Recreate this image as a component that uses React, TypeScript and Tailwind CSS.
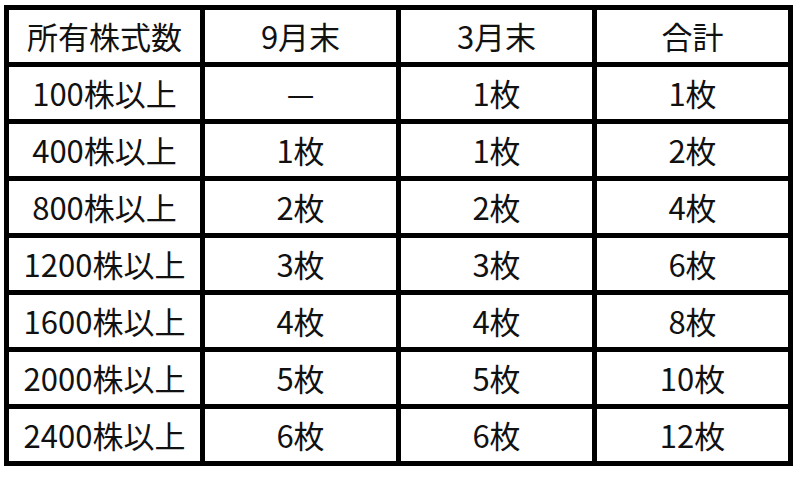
const rows = [
  ["所有株式数", "9月末", "3月末", "合計"],
  ["100株以上", "—", "1枚", "1枚"],
  ["400株以上", "1枚", "1枚", "2枚"],
  ["800株以上", "2枚", "2枚", "4枚"],
  ["1200株以上", "3枚", "3枚", "6枚"],
  ["1600株以上", "4枚", "4枚", "8枚"],
  ["2000株以上", "5枚", "5枚", "10枚"],
  ["2400株以上", "6枚", "6枚", "12枚"],
];

const App = () => {
  return (
    <div className="w-[800px] h-[477px] bg-white pl-[4px] pt-[5px]">
      <div
        className="grid w-[789px] grid-cols-4 grid-rows-[repeat(8,52px)] gap-[5px] bg-black p-[5px] text-[31px] text-[#111]"
        style={{ fontFamily: '"Noto Sans CJK JP", "Noto Sans", sans-serif' }}
      >
        {rows.flat().map((cell, i) => (
          <div key={i} className="flex items-center justify-center bg-white pb-[2px] leading-none">
            {cell}
          </div>
        ))}
      </div>
    </div>
  );
};

export default App;
